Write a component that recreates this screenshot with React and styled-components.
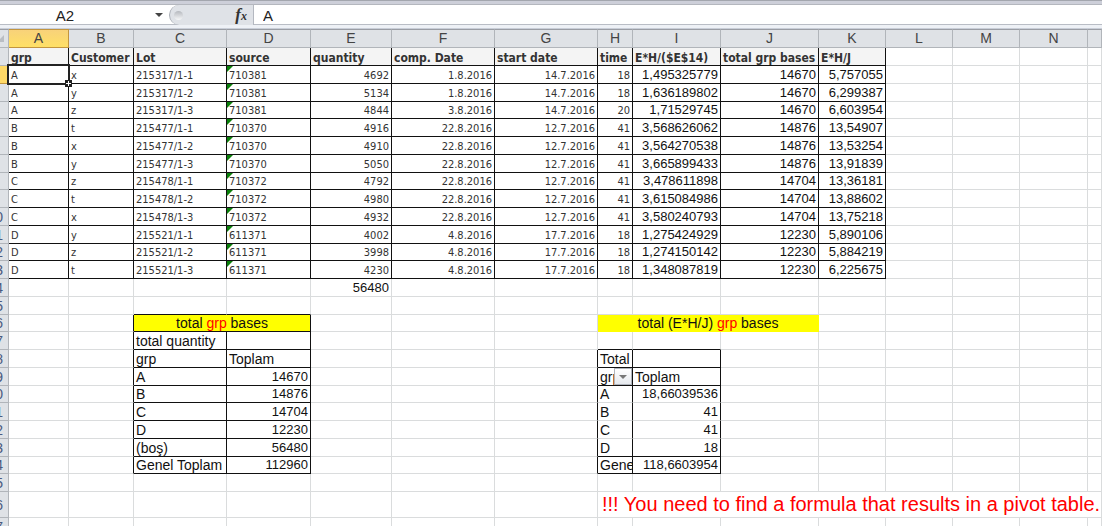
import React from 'react';
import styled, { createGlobalStyle, css } from 'styled-components';

const Red = styled.span`
	color: #f00;
`;

const COLUMNS = [
	{ name: 'A', width: 60 },
	{ name: 'B', width: 65 },
	{ name: 'C', width: 93 },
	{ name: 'D', width: 84 },
	{ name: 'E', width: 81 },
	{ name: 'F', width: 103 },
	{ name: 'G', width: 103 },
	{ name: 'H', width: 35 },
	{ name: 'I', width: 88 },
	{ name: 'J', width: 98 },
	{ name: 'K', width: 67 },
	{ name: 'L', width: 67 },
	{ name: 'M', width: 67 },
	{ name: 'N', width: 68 },
	{ name: '' },
];

const HEADINGS = ['grp', 'Customer', 'Lot', 'source', 'quantity', 'comp. Date', 'start date', 'time', 'E*H/($E$14)', 'total grp bases', 'E*H/J'];

const LOTS = [
	['A', 'x', '215317/1-1', '710381', '4692', '1.8.2016', '14.7.2016', '18', '1,495325779', '14670', '5,757055'],
	['A', 'y', '215317/1-2', '710381', '5134', '1.8.2016', '14.7.2016', '18', '1,636189802', '14670', '6,299387'],
	['A', 'z', '215317/1-3', '710381', '4844', '3.8.2016', '14.7.2016', '20', '1,71529745', '14670', '6,603954'],
	['B', 't', '215477/1-1', '710370', '4916', '22.8.2016', '12.7.2016', '41', '3,568626062', '14876', '13,54907'],
	['B', 'x', '215477/1-2', '710370', '4910', '22.8.2016', '12.7.2016', '41', '3,564270538', '14876', '13,53254'],
	['B', 'y', '215477/1-3', '710370', '5050', '22.8.2016', '12.7.2016', '41', '3,665899433', '14876', '13,91839'],
	['C', 'z', '215478/1-1', '710372', '4792', '22.8.2016', '12.7.2016', '41', '3,478611898', '14704', '13,36181'],
	['C', 't', '215478/1-2', '710372', '4980', '22.8.2016', '12.7.2016', '41', '3,615084986', '14704', '13,88602'],
	['C', 'x', '215478/1-3', '710372', '4932', '22.8.2016', '12.7.2016', '41', '3,580240793', '14704', '13,75218'],
	['D', 'y', '215521/1-1', '611371', '4002', '4.8.2016', '17.7.2016', '18', '1,275424929', '12230', '5,890106'],
	['D', 'z', '215521/1-2', '611371', '3998', '4.8.2016', '17.7.2016', '18', '1,274150142', '12230', '5,884219'],
	['D', 't', '215521/1-3', '611371', '4230', '4.8.2016', '17.7.2016', '18', '1,348087819', '12230', '6,225675'],
];

// pivot cells below the list, keyed by address
const CELLS = {
	E14: { text: '56480', right: true },
	C16: { text: <>total <Red>grp</Red> bases</>, span: 2, center: true, fill: true, edge: 'rb' },
	H16: { text: <>total (E*H/J) <Red>grp</Red> bases</>, span: 3, center: true, fill: true, edge: 'y' },
	C17: { text: 'total quantity', edge: 'rb' },
	D17: { edge: 'rb' },
	C18: { text: 'grp', edge: 'rb' },
	D18: { text: 'Toplam', edge: 'rb' },
	C19: { text: 'A', edge: 'rb' },
	D19: { text: '14670', right: true, edge: 'rb' },
	C20: { text: 'B', edge: 'rb' },
	D20: { text: '14876', right: true, edge: 'rb' },
	C21: { text: 'C', edge: 'rb' },
	D21: { text: '14704', right: true, edge: 'rb' },
	C22: { text: 'D', edge: 'rb' },
	D22: { text: '12230', right: true, edge: 'rb' },
	C23: { text: '(boş)', edge: 'rb' },
	D23: { text: '56480', right: true, edge: 'rb' },
	C24: { text: 'Genel Toplam', edge: 'rb' },
	D24: { text: '112960', right: true, edge: 'rb' },
	C15: { edge: 'b' },
	D15: { edge: 'b' },
	H17: { edge: 'b' },
	I17: { edge: 'b' },
	H18: { text: 'Total', edge: 'rb' },
	I18: { edge: 'rb' },
	H19: { text: 'grp', filter: true, edge: 'rb' },
	I19: { text: 'Toplam', edge: 'rb' },
	H20: { text: 'A', edge: 'r' },
	I20: { text: '18,66039536', right: true, edge: 'r' },
	H21: { text: 'B', edge: 'r' },
	I21: { text: '41', right: true, edge: 'r' },
	H22: { text: 'C', edge: 'r' },
	I22: { text: '41', right: true, edge: 'r' },
	H23: { text: 'D', edge: 'rb' },
	I23: { text: '18', right: true, edge: 'rb' },
	H24: { text: 'Gene', edge: 'rb' },
	I24: { text: '118,6603954', right: true, edge: 'rb' },
	H26: { text: '!!! You need to find a formula that results in a pivot table.', span: 8, note: true },
};

function getCell(column, row) {
	const key = COLUMNS[column].name + row;
	if (row === 1 && column < 11) {
		return { text: HEADINGS[column], heading: true, edge: 'rb' };
	}
	if (row >= 2 && row <= 13 && column < 11) {
		return {
			text: LOTS[row - 2][column],
			small: column < 8,
			right: column > 3,
			warning: column === 3,
			selected: key === 'A2',
			edge: 'rb',
		};
	}
	// left edges of the two pivots
	if (column === 1 && row >= 16 && row <= 24) return { edge: 'r' };
	if (column === 6 && row >= 18 && row <= 24) return { edge: 'r' };
	return CELLS[key] || {};
}

function SheetRow({ row }) {
	const cells = [];
	for (let column = 0; column < COLUMNS.length; column++) {
		const { text, span, selected, warning, filter, ...look } = getCell(column, row);
		cells.push(
			<Cell key={column} colSpan={span} $look={look}>
				{warning && <Warning />}
				{text && <CellText $look={look}>{text}</CellText>}
				{filter && (
					<FilterButton type="button" aria-label="Filter grp">
						<Arrow $light width="8" height="4" viewBox="0 0 8 4"><path d="M0 0h8L4 4z" /></Arrow>
					</FilterButton>
				)}
				{selected && (
					<Selection>
						<Handle viewBox="0 0 7 7">
							<path d="M0 0h7v7H0z" fill="#222" />
							<path d="M3 1h1v2h2v1H4v2H3V4H1V3h2z" fill="#fff" />
						</Handle>
					</Selection>
				)}
			</Cell>
		);
		if (span) column += span - 1;
	}
	return (
		<Row $tall={row === 26}>
			<RowHeader scope="row" $active={row === 2}>
				<RowNumber>{row > 9 ? row : ''}</RowNumber>
			</RowHeader>
			{cells}
		</Row>
	);
}

export default function App() {
	return (
		<Window>
			<GlobalStyle />
			<FormulaBar>
				<NameBox aria-label="Name box" defaultValue="A2" />
				<NameArrow type="button" aria-label="Show names">
					<Arrow width="8" height="4" viewBox="0 0 8 4"><path d="M0 0h8L4 4z" /></Arrow>
				</NameArrow>
				<FormulaTools>
					<Knob />
					<FxButton type="button" aria-label="Insert function">f<sub>x</sub></FxButton>
				</FormulaTools>
				<FormulaInput aria-label="Formula" defaultValue="A" />
			</FormulaBar>
			<Sheet>
				<Grid>
					<colgroup>
						<col style={{ width: 9 }} />
						{COLUMNS.map((column, i) => <col key={i} style={{ width: column.width }} />)}
					</colgroup>
					<thead>
						<tr>
							<Corner><svg width="6" height="9" viewBox="0 0 6 9"><path d="M4 1v7H-3z" fill="#b9bdc3" /></svg></Corner>
							{COLUMNS.map((column, i) => (
								<ColumnHeader key={i} scope="col" $active={i === 0}>{column.name}</ColumnHeader>
							))}
						</tr>
					</thead>
					<tbody>
						{Array.from({ length: 27 }, (_, i) => <SheetRow key={i} row={i + 1} />)}
					</tbody>
				</Grid>
			</Sheet>
		</Window>
	);
}

const GlobalStyle = createGlobalStyle`
	* {
		box-sizing: border-box;
	}

	body {
		margin: 0;
		background: #fff;
		font-family: "Liberation Sans", Arial, sans-serif;
	}
`;

const Window = styled.div`
	display: flex;
	flex-direction: column;
	height: 100vh;
	overflow: hidden;
`;

const FormulaBar = styled.div`
	display: flex;
	flex: none;
	height: 29px;
	padding: 5px 0 4px;
	background: linear-gradient(#a3a6ae 1px, #cdcfd9 1px 4px, #b4b7be 4px 5px, #fff 5px 24px, #b9bdc5 24px 25px, #eef1f6 25px 28px, #c9ced8 28px);
`;

const NameBox = styled.input`
	width: 130px;
	padding: 0;
	border: 0;
	background: transparent;
	color: #222;
	font: 15px "Liberation Sans", Arial, sans-serif;
	text-align: center;
`;

const NameArrow = styled.button`
	display: flex;
	align-items: center;
	justify-content: center;
	width: 38px;
	margin-right: 1px;
	padding: 0 0 0 19px;
	border: 0;
	background: transparent;
`;

const Arrow = styled.svg`
	flex: none;
	fill: ${({ $light }) => ($light ? '#777' : '#444')};
`;

const FormulaTools = styled.div`
	display: flex;
	align-items: center;
	justify-content: space-between;
	width: 85px;
	padding: 0 6px 0 4px;
	border-left: 1px solid #a9adb5;
	border-right: 1px solid #b4b8c0;
	border-radius: 10px 0 0 10px;
	background: #dfe2e7;
`;

const Knob = styled.span`
	width: 9px;
	height: 9px;
	border-radius: 50%;
	background: linear-gradient(#b5b8be, #f6f7f8);
`;

const FxButton = styled.button`
	padding: 0;
	border: 0;
	background: transparent;
	color: #333;
	font: italic bold 17px/18px "Liberation Serif", "Times New Roman", serif;

	sub {
		font-size: 12px;
		line-height: 1px;
		vertical-align: baseline;
	}
`;

const FormulaInput = styled.input`
	flex: 1;
	min-width: 0;
	padding: 0 9px;
	border: 0;
	background: transparent;
	color: #222;
	font: 15px "Liberation Sans", Arial, sans-serif;
`;

const Sheet = styled.main`
	flex: 1;
	min-height: 0;
	overflow: hidden;
`;

const Grid = styled.table`
	width: 100%;
	border-spacing: 0;
	table-layout: fixed;
`;

const headerCell = css`
	padding: 0;
	border-right: 1px solid #b1b5ba;
	border-bottom: 1px solid #b1b5ba;
	background: #dfe2e6;
	font-weight: normal;
`;

const Corner = styled.td`
	${headerCell}
	border-top: 1px solid #9a9da4;
	line-height: 1px;
`;

const ColumnHeader = styled.th`
	${headerCell}
	height: 19px;
	border-top: 1px solid #9a9da4;
	color: #444;
	font-size: 14px;
	line-height: 17px;
	${({ $active }) => $active && css`
		border-color: #c2953f;
		background: linear-gradient(#f8d27a, #ffe066);
	`}
`;

const RowHeader = styled.th`
	${headerCell}
	${({ $active }) => $active && css`
		border-color: #c2953f;
		background: #ffd966;
	`}
`;

const RowNumber = styled.span`
	display: flex;
	justify-content: flex-end;
	height: 16px;
	overflow: hidden;
	padding-right: 5px;
	color: #4a5a80;
	font-size: 14px;
	line-height: 17px;
`;

const Row = styled.tr`
	height: ${({ $tall }) => ($tall ? 26 : 18)}px;

	${({ $tall }) => !$tall && css`
		&:nth-child(4n) {
			height: 17px;
		}
	`}
`;

const edgeColor = (edge = '', side) => {
	if (edge === 'y') return '#ff0';
	return edge.includes(side) ? '#111' : '#dadcdd';
};

const Cell = styled.td`
	position: relative;
	padding: 0;
	border-right: 1px solid ${({ $look }) => edgeColor($look.edge, 'r')};
	border-bottom: 1px solid ${({ $look }) => edgeColor($look.edge, 'b')};
	background: ${({ $look }) => ($look.fill ? '#ff0' : $look.heading ? '#f4f4f4' : '#fff')};
`;

const CellText = styled.div`
	height: 16px;
	overflow: hidden;
	padding: 0 2px;
	color: #111;
	font-size: ${({ $look }) => ($look.right ? 13 : 14)}px;
	line-height: 16px;
	text-align: ${({ $look }) => ($look.center ? 'center' : $look.right ? 'right' : 'left')};
	white-space: nowrap;

	${({ $look }) => ($look.small || $look.heading) && css`
		color: #333;
		font-family: "DejaVu Sans Condensed", "DejaVu Sans", Tahoma, sans-serif;
		font-size: ${$look.heading ? 12 : 11}px;
		font-weight: ${$look.heading ? 'bold' : 'normal'};
		line-height: 18px;
	`}

	${({ $look }) => $look.note && css`
		height: 25px;
		padding: 0 4px;
		color: #f00;
		font-size: 20px;
		line-height: 25px;
	`}
`;

const Warning = styled.i`
	position: absolute;
	top: 0;
	left: 0;
	border-top: 6px solid #0a800a;
	border-right: 6px solid transparent;
`;

const Selection = styled.div`
	position: absolute;
	z-index: 1;
	inset: -2px;
	border: 2px solid #222;
`;

const Handle = styled.svg`
	position: absolute;
	right: -4px;
	bottom: -4px;
	width: 7px;
	height: 7px;
`;

const FilterButton = styled.button`
	position: absolute;
	right: 0;
	bottom: 0;
	display: flex;
	align-items: center;
	justify-content: center;
	width: 18px;
	height: 17px;
	padding: 0;
	border: 1px solid #b0b5bd;
	background: linear-gradient(#fff, #e6e9ee);
`;
